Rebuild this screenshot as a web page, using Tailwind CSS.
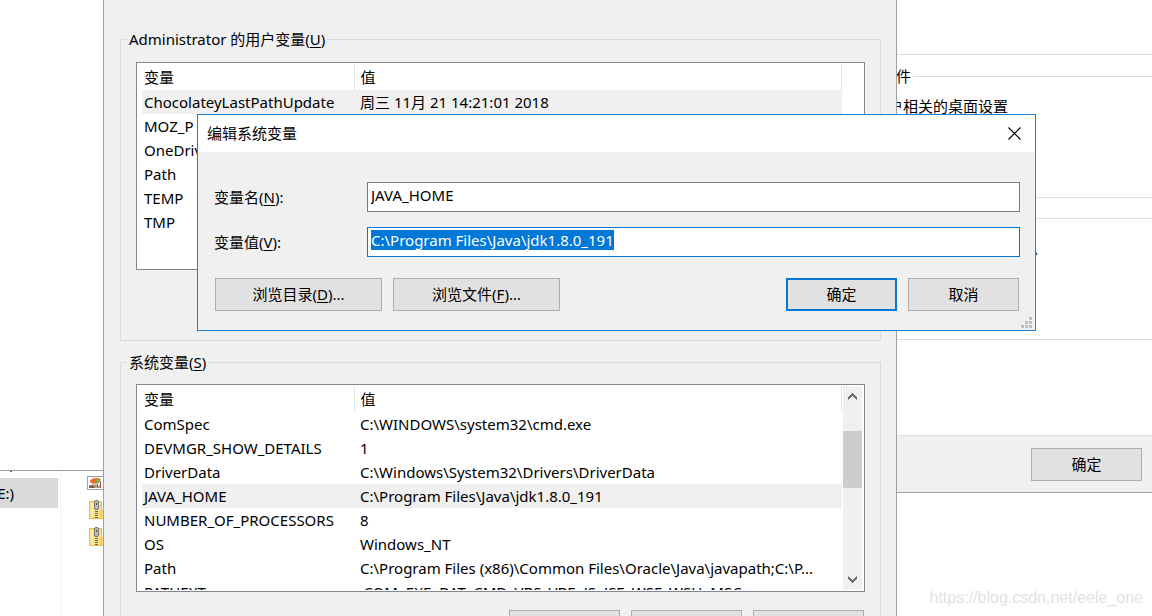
<!DOCTYPE html>
<html lang="zh-CN">
<head>
  <meta charset="utf-8"/>
  <meta content="width=device-width, initial-scale=1.0" name="viewport"/>
  <title>编辑系统变量</title>
  <script src="https://cdn.jsdelivr.net/npm/@tailwindcss/browser@4"></script>
</head>
<body class="bg-white text-black text-[15px] leading-5 font-['Noto_Sans','Noto_Sans_CJK_SC',sans-serif]">
  <div class="relative h-screen overflow-hidden">

    <!-- File explorer -->
    <div class="absolute left-0 top-[470px] bottom-0 w-[120px] flex border-t border-[#a0a0a0] overflow-hidden">
      <div class="w-[61px] shrink-0 border-r border-[#f3f3f3] overflow-hidden">
        <div class="-mt-[23px] h-[30px] w-[58px] pr-11 flex items-center justify-end whitespace-nowrap">(D:)</div>
        <div class="h-[30px] w-[58px] pr-11 flex items-center justify-end whitespace-nowrap bg-[#d9d9d9]">(E:)</div>
      </div>
      <div class="flex flex-col pl-[26px] pt-[5px]">
        <svg class="w-[22px] h-[14px]" viewBox="0 0 22 14">
          <rect x="0.5" y="0.5" width="21" height="13" fill="#fff" stroke="#a3a3a3"/>
          <path d="M2 9h3l3-1 3 2 3-1v3H2z" fill="#b9a08f"/>
          <path d="M2 10l4-1 2 3H2z" fill="#8c5a41"/>
          <path d="M3 6c0-3 3-4 8-4l-2 5-3 1z" fill="#ee6a2b"/>
          <path d="M11 2l3 1-2 4-3 1-1-1z" fill="#7fae4c"/>
          <path d="M13.500 5v7M10.500 8v3" stroke="#a04a50" fill="none"/>
        </svg>
        <svg class="w-[20px] h-[20px] mt-[10px]" viewBox="0 0 20 20">
          <path d="M2.500 1.500h12v9h3v8h-15z" fill="#fbe08b" stroke="#e8bf3e"/>
          <path d="M4 3h2v14H4z" fill="#fdeaa8"/>
          <path d="M13 11h2v7h-2z" fill="#f3c94f"/>
          <path d="M9.500 9v10" stroke="#666" stroke-width="3" stroke-dasharray="1 1"/>
          <rect x="7.500" y="0.500" width="4" height="9" rx="1.500" fill="#bdbdbd" stroke="#777"/>
          <path d="M9 3h1v2H9z" fill="#444"/>
        </svg>
        <svg class="w-[20px] h-[20px] mt-[7px]" viewBox="0 0 20 20">
          <path d="M2.500 1.500h12v9h3v8h-15z" fill="#fbe08b" stroke="#e8bf3e"/>
          <path d="M4 3h2v14H4z" fill="#fdeaa8"/>
          <path d="M13 11h2v7h-2z" fill="#f3c94f"/>
          <path d="M9.500 9v10" stroke="#666" stroke-width="3" stroke-dasharray="1 1"/>
          <rect x="7.500" y="0.500" width="4" height="9" rx="1.500" fill="#bdbdbd" stroke="#777"/>
          <path d="M9 3h1v2H9z" fill="#444"/>
        </svg>
      </div>
    </div>

    <!-- System properties window -->
    <div class="absolute left-[800px] right-0 top-0 flex flex-col bg-white border-b border-[#a0a0a0]">
      <div class="h-[55px] border-b border-[#dcdcdc]"></div>
      <fieldset class="mt-[11px] h-[132px] border border-r-0 border-[#dcdcdc] pl-[27px]">
        <legend class="-ml-[9px] px-0.5">用户配置文件</legend>
        <p class="pt-[10px]">与登录帐户相关的桌面设置</p>
      </fieldset>
      <fieldset class="mt-[10px] h-[132px] border border-r-0 border-[#dcdcdc] pl-[27px]">
        <legend class="-ml-[9px] px-0.5">启动和故障恢复</legend>
        <p class="pt-[10px]">系统启动、系统故障和调试信息</p>
      </fieldset>
      <div class="mt-[95px] flex justify-end bg-[#f0f0f0] border-t border-[#dcdcdc] pt-3 pb-[11px] pr-[10px]">
        <button class="w-[111px] h-[33px] pb-0.5 bg-[#e1e1e1] border border-[#adadad]" type="button">确定</button>
      </div>
    </div>

    <!-- Environment variables window -->
    <div class="absolute left-[103px] top-0 bottom-0 w-[794px] bg-[#f0f0f0] border-x border-[#a0a0a0] pl-4 pr-[15px] pt-[29px] overflow-hidden">
      <fieldset class="h-[312px] border border-[#dcdcdc] px-[15px]">
        <legend class="-ml-[9px] px-0.5">Administrator 的用户变量(<u class="underline-offset-2">U</u>)</legend>
        <div class="mt-[13px] h-[208px] flex bg-white border border-[#828790] pt-px pl-[5px] overflow-hidden">
          <table class="w-[700px] table-fixed self-start text-left">
            <thead>
              <tr class="h-[26px]">
                <th class="w-[212px] pl-0.5 font-normal border-r border-[#e5e5e5]">变量</th>
                <th class="pl-1.5 font-normal border-r border-[#e5e5e5]">值</th>
              </tr>
            </thead>
            <tbody>
              <tr class="h-6 bg-[#f0f0f0]"><td class="pl-0.5">ChocolateyLastPathUpdate</td><td class="pl-1.5">周三 11月 21 14:21:01 2018</td></tr>
              <tr class="h-6"><td class="pl-0.5">MOZ_P</td><td></td></tr>
              <tr class="h-6"><td class="pl-0.5">OneDrive</td><td></td></tr>
              <tr class="h-6"><td class="pl-0.5">Path</td><td></td></tr>
              <tr class="h-6"><td class="pl-0.5">TEMP</td><td></td></tr>
              <tr class="h-6"><td class="pl-0.5">TMP</td><td></td></tr>
            </tbody>
          </table>
        </div>
      </fieldset>

      <fieldset class="mt-[11px] h-[312px] border border-[#dcdcdc] px-[15px]">
        <legend class="-ml-[9px] px-0.5">系统变量(<u class="underline-offset-2">S</u>)</legend>
        <div class="mt-3 h-[208px] flex bg-white border border-[#828790] py-px pl-[5px] pr-px">
          <div class="w-[700px] overflow-hidden">
            <table class="w-full table-fixed text-left">
              <thead>
                <tr class="h-[26px]">
                  <th class="w-[212px] pl-0.5 font-normal border-r border-[#e5e5e5]">变量</th>
                  <th class="pl-1.5 font-normal border-r border-[#e5e5e5]">值</th>
                </tr>
              </thead>
              <tbody>
                <tr class="h-6"><td class="pl-0.5">ComSpec</td><td class="pl-1.5">C:\WINDOWS\system32\cmd.exe</td></tr>
                <tr class="h-6"><td class="pl-0.5">DEVMGR_SHOW_DETAILS</td><td class="pl-1.5">1</td></tr>
                <tr class="h-6"><td class="pl-0.5">DriverData</td><td class="pl-1.5">C:\Windows\System32\Drivers\DriverData</td></tr>
                <tr class="h-6 bg-[#f0f0f0]"><td class="pl-0.5">JAVA_HOME</td><td class="pl-1.5">C:\Program Files\Java\jdk1.8.0_191</td></tr>
                <tr class="h-6"><td class="pl-0.5">NUMBER_OF_PROCESSORS</td><td class="pl-1.5">8</td></tr>
                <tr class="h-6"><td class="pl-0.5">OS</td><td class="pl-1.5">Windows_NT</td></tr>
                <tr class="h-6"><td class="pl-0.5">Path</td><td class="pl-1.5 whitespace-nowrap">C:\Program Files (x86)\Common Files\Oracle\Java\javapath;C:\P...</td></tr>
                <tr class="h-6"><td class="pl-0.5">PATHEXT</td><td class="pl-1.5 whitespace-nowrap">.COM;.EXE;.BAT;.CMD;.VBS;.VBE;.JS;.JSE;.WSF;.WSH;.MSC</td></tr>
              </tbody>
            </table>
          </div>
          <!-- Scrollbar -->
          <div class="ml-px w-[19px] flex flex-col items-center bg-[#f0f0f0]">
            <svg class="w-[9px] h-[7px] mt-[7px]" viewBox="0 0 9 7"><path d="M0 4.500L4.500 0 9 4.500V7L4.500 2.700 0 7z" fill="#606060"/></svg>
            <div class="mt-[31px] w-full h-[57px] bg-[#cdcdcd]"></div>
            <svg class="w-[9px] h-[7px] mt-auto mb-[7px]" viewBox="0 0 9 7"><path d="M0 2.500L4.500 7 9 2.500V0L4.500 4.300 0 0z" fill="#606060"/></svg>
          </div>
        </div>
        <div class="mt-[18px] flex justify-end gap-[11px] pr-px">
          <button class="w-[111px] h-[33px] bg-[#e1e1e1] border border-[#adadad]" type="button">新建(W)...</button>
          <button class="w-[111px] h-[33px] bg-[#e1e1e1] border border-[#adadad]" type="button">编辑(I)...</button>
          <button class="w-[111px] h-[33px] bg-[#e1e1e1] border border-[#adadad]" type="button">删除(L)</button>
        </div>
      </fieldset>
    </div>

    <!-- Edit system variable dialog -->
    <form class="absolute left-[197px] top-[114px] w-[839px] bg-[#f0f0f0] border border-[#1883d7]">
      <div class="h-[37px] flex items-center justify-between bg-white pl-[9px] pr-[14px]">
        <h1 class="pb-0.5">编辑系统变量</h1>
        <button aria-label="关闭" type="button">
          <svg class="w-[13px] h-[13px]" viewBox="0 0 13 13"><path d="M.5.5l12 12M12.500.5l-12 12" stroke="#000" stroke-width="1.200" fill="none"/></svg>
        </button>
      </div>
      <div class="pt-[30px] pb-[19px] pl-4 pr-[15px]">
        <div class="flex items-center">
          <label class="w-[153px]" for="name">变量名(<u class="underline-offset-2">N</u>):</label>
          <input class="flex-1 h-[30px] pt-0.5 pb-1.5 px-[3px] bg-white border border-[#7a7a7a] outline-none" id="name" type="text" value="JAVA_HOME"/>
        </div>
        <div class="mt-[15px] flex items-center">
          <label class="w-[153px]" for="value">变量值(<u class="underline-offset-2">V</u>):</label>
          <input class="flex-1 h-[30px] pt-0.5 pb-1.5 px-[3px] bg-white border border-[#0078d7] outline-none selection:bg-[#0078d7] selection:text-white" id="value" type="text" value="C:\Program Files\Java\jdk1.8.0_191"/>
        </div>
        <div class="mt-[21px] pl-px pr-px flex gap-[11px]">
          <button class="w-[167px] h-[33px] pb-0.5 bg-[#e1e1e1] border border-[#adadad]" type="button">浏览目录(<u class="underline-offset-2">D</u>)...</button>
          <button class="w-[167px] h-[33px] pb-0.5 bg-[#e1e1e1] border border-[#adadad]" type="button">浏览文件(<u class="underline-offset-2">F</u>)...</button>
          <button class="ml-auto w-[111px] h-[33px] pb-0.5 bg-[#e1e1e1] border-2 border-[#0078d7]" type="submit">确定</button>
          <button class="w-[111px] h-[33px] pb-0.5 bg-[#e1e1e1] border border-[#adadad]" type="button">取消</button>
        </div>
      </div>
      <!-- Resize grip -->
      <svg class="absolute right-[3px] bottom-[2px] w-[11px] h-[11px]" viewBox="0 0 11 11">
        <path d="M8 0h3v3H8zM4 4h3v3H4zM8 4h3v3H8zM0 8h3v3H0zM4 8h3v3H4zM8 8h3v3H8z" fill="#bfbfbf"/>
      </svg>
    </form>

    <p class="absolute right-[9px] bottom-[8px] text-[16px] text-[#e2e2e2] font-['Liberation_Sans',sans-serif]">https://blog.csdn.net/eele_one</p>
  </div>
  <script>
    // Select the value so it can be typed over
    const valueInput = document.getElementById('value');
    valueInput.focus();
    valueInput.select();
  </script>
</body>
</html>
